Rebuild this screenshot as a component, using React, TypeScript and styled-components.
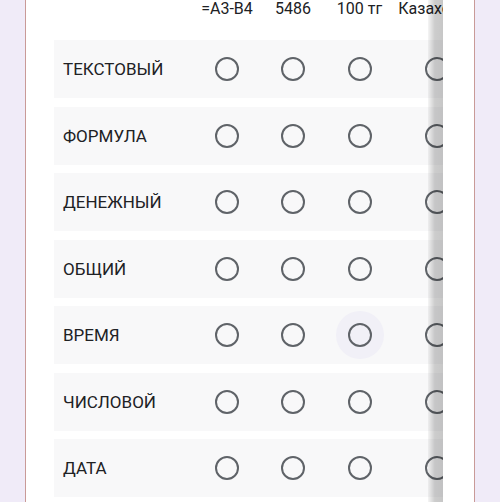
import { FC } from 'react';
import styled, { createGlobalStyle } from 'styled-components';

const columns = ['=A3-B4', '5486', '100 тг', 'Казахстан', '12.03.2021'];
const rows = ['ТЕКСТОВЫЙ', 'ФОРМУЛА', 'ДЕНЕЖНЫЙ', 'ОБЩИЙ', 'ВРЕМЯ', 'ЧИСЛОВОЙ', 'ДАТА'];
const template = '140px 66px 66px 67px 88px 96px';

const GlobalStyle = createGlobalStyle`
  html, body {
    margin: 0;
    padding: 0;
    background: #f0ebf8;
    overflow: hidden;
  }
  body {
    font-family: Roboto, 'Noto Sans', Arial, sans-serif;
    color: #202124;
  }
`;

const Page = styled.div`
  height: 502px;
  padding: 0 25px;
  box-sizing: border-box;
`;

const Card = styled.div`
  height: 100%;
  background: #ffffff;
  border-left: 1px solid #c99a98;
  border-right: 1px solid #c99a98;
  padding: 0 31px 0 28px;
  box-sizing: border-box;
`;

const Scroller = styled.div`
  position: relative;
  overflow: hidden;
  height: 100%;
`;

const Grid = styled.div`
  display: flex;
  flex-direction: column;
  gap: 8.5px;
  width: max-content;
`;

const Row = styled.div<{ $header?: boolean }>`
  display: grid;
  grid-template-columns: ${template};
  align-items: ${(p) => (p.$header ? 'start' : 'center')};
  height: ${(p) => (p.$header ? '31.5px' : '58px')};
  background: ${(p) => (p.$header ? 'transparent' : '#f8f8f9')};
`;

const ColumnTitle = styled.div`
  font-size: 16px;
  line-height: 16px;
  padding-top: 1px;
  text-align: center;
  white-space: nowrap;
`;

const Label = styled.div`
  font-size: 17px;
  padding-left: 9px;
`;

const Cell = styled.div`
  display: flex;
  justify-content: center;
  align-items: center;
`;

const Halo = styled.div<{ $hover?: boolean }>`
  width: 48px;
  height: 48px;
  border-radius: 50%;
  display: flex;
  align-items: center;
  justify-content: center;
  background: ${(p) => (p.$hover ? '#f1f0f7' : 'transparent')};
`;

const Radio = styled.div`
  width: 24px;
  height: 24px;
  border: 2.5px solid #5f6368;
  border-radius: 50%;
  box-sizing: border-box;
`;

const EdgeShadow = styled.div`
  position: absolute;
  top: 0;
  right: 0;
  bottom: 0;
  width: 15px;
  background: linear-gradient(
    to right,
    rgba(0, 0, 0, 0.04),
    rgba(0, 0, 0, 0.2) 45%,
    rgba(0, 0, 0, 0.22)
  );
  pointer-events: none;
`;

const App: FC = () => {
  return (
    <>
      <GlobalStyle />
      <Page>
        <Card>
          <Scroller>
            <Grid>
              <Row $header>
                <div />
                {columns.map((c) => (
                  <ColumnTitle key={c}>{c}</ColumnTitle>
                ))}
              </Row>
              {rows.map((r) => (
                <Row key={r}>
                  <Label>{r}</Label>
                  {columns.map((c, ci) => (
                    <Cell key={c}>
                      <Halo $hover={r === 'ВРЕМЯ' && ci === 2}>
                        <Radio />
                      </Halo>
                    </Cell>
                  ))}
                </Row>
              ))}
            </Grid>
            <EdgeShadow />
          </Scroller>
        </Card>
      </Page>
    </>
  );
};

export default App;
